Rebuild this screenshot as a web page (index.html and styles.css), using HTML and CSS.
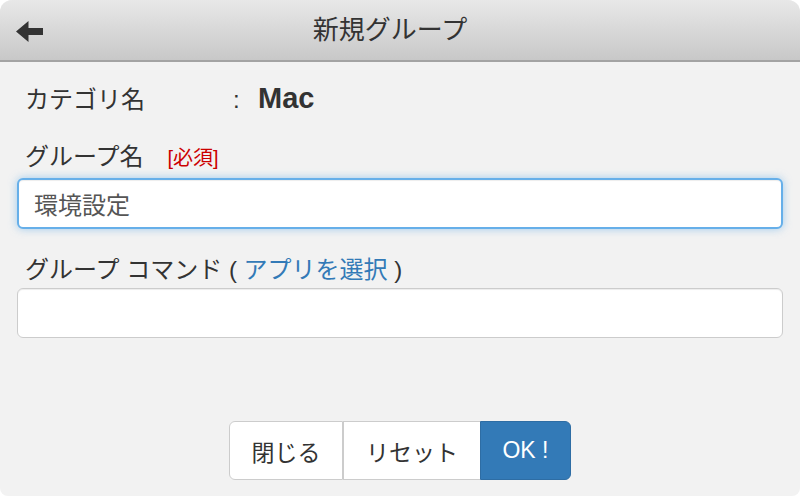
FILE: index.html
```html
<!DOCTYPE html>
<html lang="ja">
<head>
<meta charset="utf-8">
<title>新規グループ</title>
<link rel="stylesheet" href="styles.css">
</head>
<body>
<div class="app">
  <header class="header">
    <div class="back">
      <svg width="27" height="21" viewBox="0 0 27 21"><path d="M0 10.5 L12.5 0 L12.5 7 L27 7 L27 14 L12.5 14 L12.5 21 Z" fill="#333"/></svg>
    </div>
    <h1 class="title">新規グループ</h1>
    <div class="spacer"></div>
  </header>
  <main class="content">
    <div class="cat-row">
      <span class="cat-label">カテゴリ名</span>
      <span class="colon">:</span>
      <span class="cat-value">Mac</span>
    </div>
    <label class="field-label">グループ名<span class="req">[必須]</span></label>
    <input class="field focus" type="text" value="環境設定">
    <label class="field-label second">グループ コマンド ( <a class="link">アプリを選択</a> )</label>
    <input class="field" type="text" value="">
    <div class="btn-row">
      <div class="btn-group">
        <button class="btn">閉じる</button>
        <button class="btn">リセット</button>
        <button class="btn primary">OK !</button>
      </div>
    </div>
  </main>
</div>
</body>
</html>
```
FILE: styles.css
```css
* { box-sizing: border-box; }
html, body { margin: 0; padding: 0; background: #fff; }
body {
  font-family: "Liberation Sans", "Noto Sans CJK JP", sans-serif;
  color: #333;
}
.app {
  width: 800px;
  height: 496px;
  background: #f2f2f2;
  border-radius: 12px 12px 8px 8px;
  overflow: hidden;
  display: flex;
  flex-direction: column;
}
.header {
  height: 62px;
  flex: none;
  background: linear-gradient(#e8e8e8, #c8c8c8);
  border-bottom: 2px solid #a3a3a3;
  display: grid;
  grid-template-columns: 1fr auto 1fr;
  align-items: center;
}
.back { padding-left: 16px; display: flex; align-items: center; padding-top: 3px; }
.back svg { display: block; }
.title {
  margin: 0;
  padding-right: 20px;
  font-weight: normal;
  font-size: 26px;
  color: #333;
  line-height: 30px;
}
.content {
  padding: 21px 17px 0;
  display: flex;
  flex-direction: column;
}
.cat-row {
  display: flex;
  align-items: baseline;
  padding-left: 8px;
  line-height: 30px;
  height: 30px;
}
.cat-label { font-size: 24px; width: 208px; }
.colon { font-size: 24px; width: 25px; }
.cat-value { font-size: 29px; font-weight: bold; color: #333; }
.field-label {
  display: block;
  padding-left: 8px;
  font-size: 24px;
  line-height: 28px;
  margin-top: 30px;
  margin-bottom: 6px;
}
.field-label.second { margin-top: 27px; margin-bottom: 4px; }
.req {
  color: #c00;
  font-size: 20px;
  margin-left: 24px;
}
.link { color: #337ab7; text-decoration: none; }
.field {
  display: block;
  width: 100%;
  height: 51px;
  border: 1.5px solid #ccc;
  border-radius: 6px;
  background: #fff;
  font-family: "Liberation Sans", "Noto Sans CJK JP", sans-serif;
  font-size: 24px;
  color: #555;
  padding: 0 15px;
  outline: none;
  box-shadow: inset 0 1px 1px rgba(0,0,0,0.075);
}
.field + .field-label + .field { height: 50px; }
.field.focus {
  border-color: #66afe9;
  border-width: 2px;
  box-shadow: inset 0 1px 1px rgba(0,0,0,0.075), 0 0 8px rgba(102,175,233,0.6);
}
.btn-row {
  display: flex;
  justify-content: center;
  margin-top: 83px;
}
.btn-group { display: flex; }
.btn {
  height: 59px;
  font-family: "Liberation Sans", "Noto Sans CJK JP", sans-serif;
  font-size: 23px;
  color: #333;
  background: #fff;
  border: 1.5px solid #ccc;
  margin: 0;
  padding: 0 20px;
}
.btn:first-child { border-radius: 6px 0 0 6px; width: 114px; }
.btn:nth-child(2) { border-left: 1px solid #ccc; border-right: none; width: 137px; }
.btn.primary {
  background: #337ab7;
  border-color: #2e6da4;
  color: #fff;
  border-radius: 0 6px 6px 0;
  width: 91px;
  padding: 0;
}
```
